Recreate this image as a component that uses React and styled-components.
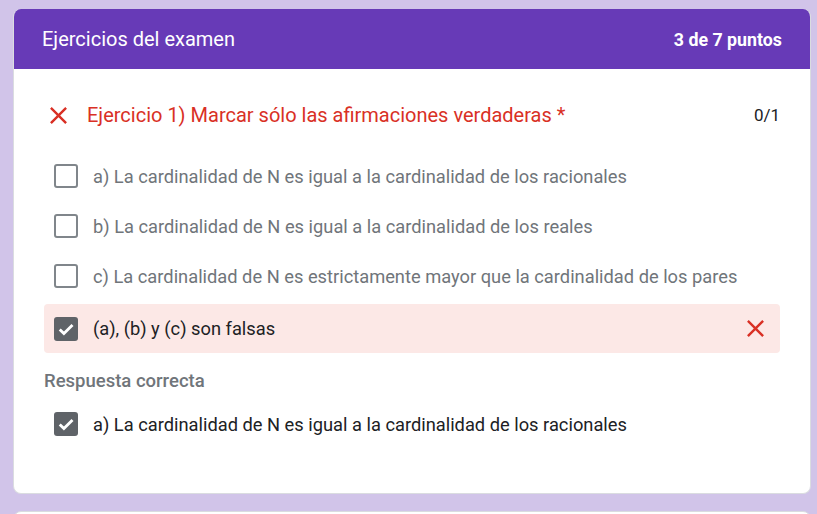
import React from "react";
import styled, { createGlobalStyle } from "styled-components";

const GlobalStyle = createGlobalStyle`
  html, body {
    margin: 0;
    padding: 0;
    background: #d1c4e9;
    font-family: Roboto, "Liberation Sans", Arial, sans-serif;
  }
`;

const options = [
  { text: "a) La cardinalidad de N es igual a la cardinalidad de los racionales" },
  { text: "b) La cardinalidad de N es igual a la cardinalidad de los reales" },
  { text: "c) La cardinalidad de N es estrictamente mayor que la cardinalidad de los pares" },
  { text: "(a), (b) y (c) son falsas", checked: true, wrong: true },
];

function CloseIcon({ size = 24 }) {
  return (
    <svg width={size} height={size} viewBox="0 0 24 24" fill="#d93025">
      <path d="M19 6.41L17.59 5 12 10.59 6.41 5 5 6.41 10.59 12 5 17.59 6.41 19 12 13.41 17.59 19 19 17.59 13.41 12z" />
    </svg>
  );
}

function Checkbox({ checked }) {
  return (
    <Box checked={checked}>
      {checked && (
        <svg width="20" height="20" viewBox="0 0 24 24">
          <path d="M4.5 12.5l5 5L19.8 7.2" fill="none" stroke="#fff" strokeWidth="3.4" />
        </svg>
      )}
    </Box>
  );
}

export default function App() {
  return (
    <>
      <GlobalStyle />
      <Page>
        <Card>
          <Header>
            <HeaderTitle>Ejercicios del examen</HeaderTitle>
            <Score>3 de 7 puntos</Score>
          </Header>
          <Body>
            <QuestionRow>
              <IconSlot>
                <CloseIcon size={29} />
              </IconSlot>
              <QuestionTitle>Ejercicio 1) Marcar sólo las afirmaciones verdaderas *</QuestionTitle>
              <Points>0/1</Points>
            </QuestionRow>
            <OptionList>
              {options.map((o) => (
                <Option key={o.text} wrong={o.wrong}>
                  <Checkbox checked={o.checked} />
                  <OptionText checked={o.checked}>{o.text}</OptionText>
                  {o.wrong && (
                    <Mark>
                      <CloseIcon size={29} />
                    </Mark>
                  )}
                </Option>
              ))}
            </OptionList>
            <CorrectLabel>Respuesta correcta</CorrectLabel>
            <Option>
              <Checkbox checked />
              <OptionText checked>
                a) La cardinalidad de N es igual a la cardinalidad de los racionales
              </OptionText>
            </Option>
          </Body>
        </Card>
        <NextCard />
      </Page>
    </>
  );
}

const Page = styled.div`
  padding: 9px 6px 0 13px;
  display: flex;
  flex-direction: column;
  gap: 17px;
`;

const Card = styled.div`
  background: #fff;
  border-radius: 8px;
  overflow: hidden;
  border: 1px solid #dadce0;
  border-top: none;
  height: 485px;
  box-sizing: border-box;
`;

const NextCard = styled.div`
  background: #fff;
  border-radius: 8px;
  border: 1px solid #dadce0;
  height: 40px;
`;

const Header = styled.div`
  background: #673ab7;
  height: 60px;
  display: flex;
  align-items: center;
  justify-content: space-between;
  padding: 0 28px 0 28px;
  color: #fff;
`;

const HeaderTitle = styled.div`
  font-size: 20px;
`;

const Score = styled.div`
  font-size: 17.8px;
  font-weight: 700;
`;

const Body = styled.div`
  padding: 25px 30px 0 30px;
`;

const QuestionRow = styled.div`
  display: flex;
  align-items: center;
  height: 42px;
`;

const IconSlot = styled.div`
  width: 43px;
  display: flex;
  align-items: center;
`;

const QuestionTitle = styled.div`
  flex: 1;
  color: #d93025;
  font-size: 20px;
`;

const Points = styled.div`
  color: #202124;
  font-size: 17px;
`;

const OptionList = styled.div`
  margin-top: 15px;
  display: flex;
  flex-direction: column;
`;

const Option = styled.div`
  display: flex;
  align-items: center;
  height: ${(p) => (p.wrong ? "49px" : "50px")};
  margin-top: ${(p) => (p.wrong ? "3px" : "0")};
  padding: 0 0 0 10px;
  border-radius: 4px;
  background: ${(p) => (p.wrong ? "#fce8e6" : "transparent")};
`;

const Box = styled.div`
  width: 24px;
  height: 24px;
  box-sizing: border-box;
  border-radius: 3px;
  border: ${(p) => (p.checked ? "none" : "2px solid #80868b")};
  background: ${(p) => (p.checked ? "#5f6368" : "#fff")};
  display: flex;
  align-items: center;
  justify-content: center;
  flex-shrink: 0;
`;

const OptionText = styled.div`
  flex: 1;
  margin-left: 15px;
  font-size: 18.3px;
  color: ${(p) => (p.checked ? "#202124" : "#70757a")};
`;

const Mark = styled.div`
  display: flex;
  align-items: center;
  margin-right: 10px;
`;

const CorrectLabel = styled.div`
  margin-top: 17px;
  margin-bottom: 7px;
  font-size: 18.5px;
  font-weight: 500;
  color: #70757a;
`;
